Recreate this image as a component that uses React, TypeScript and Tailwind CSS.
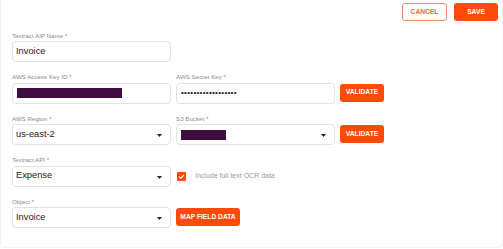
import React from "react";

const Label = ({ children }: { children: React.ReactNode }) => (
  <div className="h-[10px] flex items-center text-[6.2px] leading-none text-[#8a8a8a]">{children}</div>
);

const Caret = () => (
  <svg width="5" height="3" viewBox="0 0 5 3" className="absolute right-[8px] top-[9px]">
    <path d="M0 0 L5 0 L2.5 3 Z" fill="#222" />
  </svg>
);

const Box = ({ children, select = false }: { children?: React.ReactNode; select?: boolean }) => (
  <div className="relative w-[159px] h-[21px] border border-[#e2e2e2] rounded-[4px] bg-white flex items-center pl-[3px] text-[9.3px] text-[#222]">
    {children}
    {select && <Caret />}
  </div>
);

const Btn = ({ children, w }: { children: React.ReactNode; w: string }) => (
  <div className={`${w} h-[18px] rounded-[3px] bg-[#ff4a0a] text-white font-bold text-[6.7px] flex items-center justify-center`}>
    {children}
  </div>
);

export default function App() {
  return (
    <div
      className="w-[503px] h-[249px] bg-white overflow-hidden"
      style={{ fontFamily: '"Liberation Sans", Arial, sans-serif' }}
    >
      <div className="w-[503px] h-[248px] border-l border-r border-b border-[#f5f5f5] rounded-b-[4px] pt-[3px] pl-[10px]">
        <div className="flex justify-end gap-[7px] pr-[4px]">
          <div className="w-[45px] h-[18px] rounded-[3px] border border-[#f28a6e] text-[#f06a45] text-[6.7px] font-bold flex items-center justify-center">
            CANCEL
          </div>
          <div className="w-[44px] h-[18px] rounded-[3px] bg-[#ff4a0a] text-white text-[6.7px] font-bold flex items-center justify-center">
            SAVE
          </div>
        </div>
        <div className="mt-[10px] ml-[1px] flex flex-col gap-[10.5px]">
          <div className="flex flex-col">
            <Label>Textract AIP Name *</Label>
            <Box>Invoice</Box>
          </div>
          <div className="flex gap-[5px]">
            <div className="flex flex-col">
              <Label>AWS Access Key ID *</Label>
              <Box>
                <div className="ml-[1px] w-[105px] h-[10px] bg-[#3e0c3e]" />
              </Box>
            </div>
            <div className="flex flex-col">
              <Label>AWS Secret Key *</Label>
              <Box>
                <span className="ml-[1px] text-[8px] tracking-[0.3px] text-[#222]">••••••••••••••••••</span>
              </Box>
            </div>
            <div className="flex flex-col pt-[11px]">
              <Btn w="w-[44px]">VALIDATE</Btn>
            </div>
          </div>
          <div className="flex gap-[5px]">
            <div className="flex flex-col">
              <Label>AWS Region *</Label>
              <Box select>us-east-2</Box>
            </div>
            <div className="flex flex-col">
              <Label>S3 Bucket *</Label>
              <Box select>
                <div className="ml-[1px] w-[45px] h-[10px] bg-[#3e0c3e]" />
              </Box>
            </div>
            <div className="flex flex-col pt-[11px]">
              <Btn w="w-[44px]">VALIDATE</Btn>
            </div>
          </div>
          <div className="flex gap-[6px]">
            <div className="flex flex-col">
              <Label>Textract API *</Label>
              <Box select>Expense</Box>
            </div>
            <div className="flex items-center pt-[10px] gap-[9px]">
              <div className="w-[9px] h-[9px] rounded-[1px] bg-[#ff4a0a] flex items-center justify-center">
                <svg width="7" height="7" viewBox="0 0 7 7">
                  <path d="M1 3.6 L2.8 5.3 L6 1.8" stroke="white" strokeWidth="1.2" fill="none" />
                </svg>
              </div>
              <span className="text-[7px] text-[#9a9a9a]">Include full text OCR data</span>
            </div>
          </div>
          <div className="flex gap-[5px]">
            <div className="flex flex-col">
              <Label>Object *</Label>
              <Box select>Invoice</Box>
            </div>
            <div className="flex flex-col pt-[11px]">
              <Btn w="w-[64px]">MAP FIELD DATA</Btn>
            </div>
          </div>
        </div>
      </div>
    </div>
  );
}
